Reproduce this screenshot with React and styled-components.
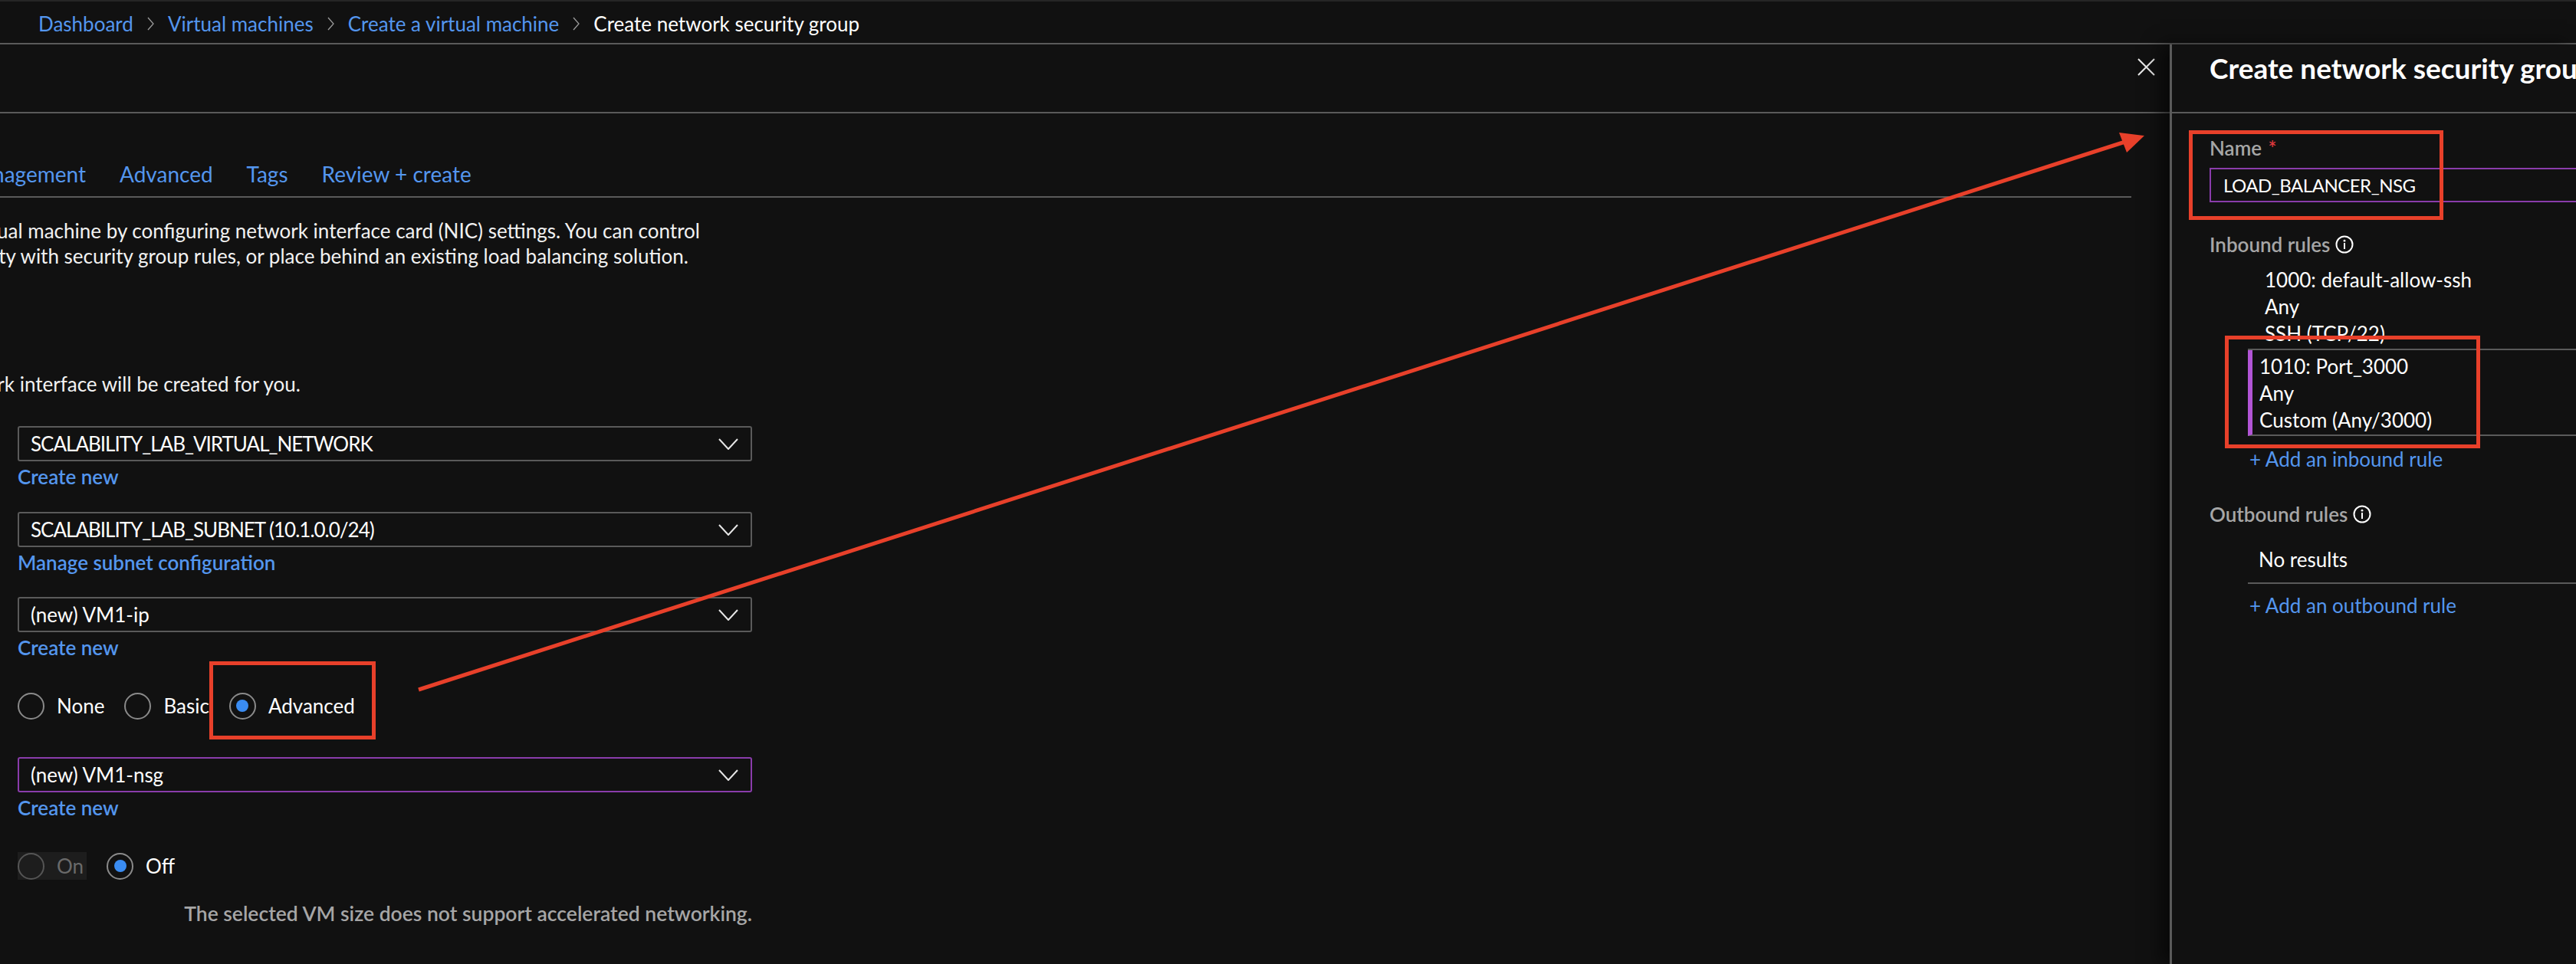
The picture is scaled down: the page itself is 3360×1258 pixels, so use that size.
import React from "react";
import styled, { createGlobalStyle } from "styled-components";

const LINK = "#5496ee";
const LINE = "#5a5a5a";
const PURPLE = "#8a3cab";
const RED = "#e8402a";

const GlobalStyle = createGlobalStyle`
  html, body { margin: 0; padding: 0; background: #111111; }
  body {
    width: 3360px;
    height: 1258px;
    overflow: hidden;
    font-family: Lato, "Open Sans", sans-serif;
    color: #ffffff;
  }
  * { box-sizing: border-box; }
`;

const Page = styled.div`
  position: relative;
  width: 3360px;
  height: 1258px;
  display: flex;
  flex-direction: column;
  background: #111111;
`;

/* ---------- breadcrumb ---------- */
const Crumbs = styled.nav`
  height: 58px;
  flex: none;
  border-top: 2px solid #262626;
  border-bottom: 2px solid ${LINE};
  display: flex;
  align-items: center;
  padding: 3px 0 0 50px;
  font-size: 26px;
`;

const Crumb = styled.span`
  color: ${(p) => (p.$current ? "#ffffff" : LINK)};
  white-space: nowrap;
`;

const CrumbSep = styled.svg`
  margin: 0 18px;
  width: 9px;
  height: 18px;
`;

/* ---------- layout ---------- */
const Main = styled.div`
  flex: 1;
  display: flex;
  min-height: 0;
`;

const LeftBlade = styled.section`
  flex: 1;
  min-width: 0;
  display: flex;
  flex-direction: column;
  overflow: hidden;
`;

const BladeHeader = styled.header`
  height: 90px;
  flex: none;
  border-bottom: 2px solid ${LINE};
  display: flex;
  justify-content: ${(p) => (p.$end ? "flex-end" : "flex-start")};
  align-items: flex-start;
  padding: ${(p) => (p.$end ? "18px 19px 0 0" : "8px 0 0 49px")};
`;

const CloseButton = styled.button`
  background: none;
  border: 0;
  padding: 0;
  width: 23px;
  height: 23px;
  display: flex;
`;

const LeftBody = styled.div`
  display: flex;
  flex-direction: column;
  padding-right: 50px;
`;

/* ---------- tabs ---------- */
const Tabs = styled.div`
  display: flex;
  gap: 44px;
  padding: 59px 0 9px;
  border-bottom: 2px solid ${LINE};
  font-size: 28px;
  line-height: 40px;
`;

const Tab = styled.span`
  color: ${LINK};
  white-space: nowrap;
`;

/* a line whose start is scrolled out of view on the left */
const ClipLine = styled.div`
  width: ${(p) => p.$end}px;
  display: flex;
  justify-content: flex-end;
  overflow: hidden;
  white-space: nowrap;
  flex: none;
`;

const Description = styled.div`
  margin-top: ${(p) => p.$top}px;
  font-size: 26px;
  line-height: 33px;
  color: #f2f2f2;
`;

/* ---------- form ---------- */
const Controls = styled.div`
  margin-left: 23px;
  width: 958px;
  display: flex;
  flex-direction: column;
`;

const Select = styled.div`
  margin-top: ${(p) => p.$top}px;
  height: 46px;
  border: 2px solid ${(p) => (p.$focus ? PURPLE : LINE)};
  border-radius: 3px;
  display: flex;
  align-items: center;
  justify-content: space-between;
  padding: 0 16px 0 15px;
  font-size: 26px;
  color: #ffffff;
`;

const SelectValue = styled.span`
  letter-spacing: ${(p) => p.$tight || 0}px;
  white-space: nowrap;
`;

const FieldLink = styled.a`
  margin-top: 2px;
  font-size: 26px;
  line-height: 36px;
  font-weight: 600;
  color: ${LINK};
  text-decoration: none;
  align-self: flex-start;
`;

const RadioGroup = styled.div`
  margin-top: ${(p) => p.$top}px;
  display: flex;
  align-items: center;
  gap: 26px;
`;

const RadioItem = styled.label`
  display: flex;
  align-items: center;
  gap: 16px;
  height: 36px;
  padding-right: ${(p) => (p.$disabled ? "4px" : "0")};
  background: ${(p) => (p.$disabled ? "#1d1d1d" : "transparent")};
  font-size: 26px;
  color: ${(p) => (p.$disabled ? "#6a6a6a" : "#ffffff")};
`;

const RadioCircle = styled.span`
  width: 35px;
  height: 35px;
  border-radius: 50%;
  border: 2px solid ${(p) => (p.$disabled ? "#555555" : "#8a8a8a")};
  display: flex;
  align-items: center;
  justify-content: center;

  &::after {
    content: "";
    width: 16px;
    height: 16px;
    border-radius: 50%;
    background: ${(p) => (p.$checked ? "#3a8cf2" : "transparent")};
  }
`;

const Note = styled.div`
  margin-top: 26px;
  align-self: flex-end;
  font-size: 26.5px;
  line-height: 36px;
  font-weight: 600;
  color: #a6a6a6;
`;

/* ---------- right blade ---------- */
const RightBlade = styled.aside`
  position: relative;
  z-index: 1;
  width: 530px;
  flex: none;
  border-left: 3px solid ${LINE};
  box-shadow: -12px 0 22px rgba(0, 0, 0, 0.55);
  background: #111111;
  display: flex;
  flex-direction: column;
`;

const Title = styled.h2`
  margin: 0;
  font-size: 37px;
  line-height: 46px;
  font-weight: 700;
  white-space: nowrap;
`;

const RightBody = styled.div`
  padding: 27px 0 0 49px;
  display: flex;
  flex-direction: column;
`;

const Label = styled.div`
  margin-top: ${(p) => p.$top || 0}px;
  display: flex;
  align-items: center;
  gap: 7px;
  font-size: 26px;
  line-height: 36px;
  font-weight: 600;
  color: #a6a6a6;
`;

const Required = styled.span`
  color: #e0393e;
  margin-left: 2px;
`;

const TextInput = styled.div`
  margin-top: 8px;
  width: 560px;
  height: 45px;
  border: 2px solid ${PURPLE};
  display: flex;
  align-items: center;
  padding-left: 16px;
  font-size: 24px;
  letter-spacing: -0.5px;
  white-space: nowrap;
`;

const RuleList = styled.div`
  margin: ${(p) => p.$top}px 0 0 50px;
  width: 600px;
  display: flex;
  flex-direction: column;
`;

const RuleRow = styled.div`
  display: flex;
  flex-direction: column;
  padding: ${(p) => p.$pad};
  border-left: ${(p) => (p.$selected ? "6px solid #b255d6" : "0")};
  border-bottom: 2px solid ${LINE};
  font-size: 26px;
  line-height: 35px;
  color: #ffffff;
  white-space: nowrap;
`;

const AddLink = styled.a`
  margin: ${(p) => p.$top}px 0 0 52px;
  font-size: 26px;
  line-height: 36px;
  color: ${LINK};
  text-decoration: none;
  white-space: nowrap;
`;

/* ---------- annotation overlay ---------- */
const Overlay = styled.svg`
  position: absolute;
  left: 0;
  top: 0;
  width: 3360px;
  height: 1258px;
  pointer-events: none;
  z-index: 5;
`;

const Chevron = () => (
  <svg width="26" height="15" viewBox="0 0 26 15">
    <polyline points="1,1 13,14 25,1" fill="none" stroke="#e6e6e6" strokeWidth="2" />
  </svg>
);

const InfoIcon = () => (
  <svg width="24" height="24" viewBox="0 0 24 24">
    <circle cx="12" cy="12" r="10.5" fill="none" stroke="#ffffff" strokeWidth="2" />
    <circle cx="12" cy="7.2" r="1.4" fill="#ffffff" />
    <rect x="11" y="10" width="2" height="8" fill="#ffffff" />
  </svg>
);

const crumbs = ["Dashboard", "Virtual machines", "Create a virtual machine"];

const SelectField = ({ top, value, link, focus, tight }) => (
  <>
    <Select $top={top} $focus={focus}>
      <SelectValue $tight={tight}>{value}</SelectValue>
      <Chevron />
    </Select>
    <FieldLink href="#">{link}</FieldLink>
  </>
);

const Radio = ({ label, checked, disabled }) => (
  <RadioItem $disabled={disabled}>
    <RadioCircle $checked={checked} $disabled={disabled} />
    {label}
  </RadioItem>
);

export default function App() {
  return (
    <Page>
      <GlobalStyle />
      <Crumbs>
        {crumbs.map((c) => (
          <React.Fragment key={c}>
            <Crumb>{c}</Crumb>
            <CrumbSep viewBox="0 0 9 18">
              <polyline points="1,1 8,9 1,17" fill="none" stroke="#9a9a9a" strokeWidth="1.3" />
            </CrumbSep>
          </React.Fragment>
        ))}
        <Crumb $current>Create network security group</Crumb>
      </Crumbs>

      <Main>
        <LeftBlade>
          <BladeHeader $end>
            <CloseButton aria-label="Close">
              <svg width="23" height="23" viewBox="0 0 23 23">
                <path d="M1 1 L22 22 M22 1 L1 22" stroke="#e8e8e8" strokeWidth="2" />
              </svg>
            </CloseButton>
          </BladeHeader>

          <LeftBody>
            <Tabs>
              <ClipLine $end={112}>
                <Tab>Management</Tab>
              </ClipLine>
              <Tab>Advanced</Tab>
              <Tab>Tags</Tab>
              <Tab>Review + create</Tab>
            </Tabs>

            <Description $top={27}>
              <ClipLine $end={913}>
                Define network connectivity for your virtual machine by configuring network interface card (NIC) settings. You can control
              </ClipLine>
              <ClipLine $end={898}>
                ports, inbound and outbound connectivity with security group rules, or place behind an existing load balancing solution.
              </ClipLine>
            </Description>

            <Description $top={134}>
              <ClipLine $end={392}>
                When creating a virtual machine, a network interface will be created for you.
              </ClipLine>
            </Description>

            <Controls>
              <SelectField top={38} value="SCALABILITY_LAB_VIRTUAL_NETWORK" link="Create new" tight={-1} />
              <SelectField top={28} value="SCALABILITY_LAB_SUBNET (10.1.0.0/24)" link="Manage subnet configuration" tight={-1} />
              <SelectField top={27} value="(new) VM1-ip" link="Create new" />

              <RadioGroup $top={40}>
                <Radio label="None" />
                <Radio label="Basic" />
                <Radio label="Advanced" checked />
              </RadioGroup>

              <SelectField top={49} value="(new) VM1-nsg" link="Create new" focus />

              <RadioGroup $top={40}>
                <Radio label="On" disabled />
                <Radio label="Off" checked />
              </RadioGroup>

              <Note>The selected VM size does not support accelerated networking.</Note>
            </Controls>
          </LeftBody>
        </LeftBlade>

        <RightBlade>
          <BladeHeader>
            <Title>Create network security group</Title>
          </BladeHeader>
          <RightBody>
            <Label>
              <span>
                Name<Required> *</Required>
              </span>
            </Label>
            <TextInput>LOAD_BALANCER_NSG</TextInput>

            <Label $top={37}>
              Inbound rules <InfoIcon />
            </Label>
            <RuleList $top={11}>
              <RuleRow $pad="0 0 2px 22px">
                <span>1000: default-allow-ssh</span>
                <span>Any</span>
                <span>SSH (TCP/22)</span>
              </RuleRow>
              <RuleRow $selected $pad="4px 0 1px 9px">
                <span>1010: Port_3000</span>
                <span>Any</span>
                <span>Custom (Any/3000)</span>
              </RuleRow>
            </RuleList>
            <AddLink href="#" $top={12}>+ Add an inbound rule</AddLink>

            <Label $top={36}>
              Outbound rules <InfoIcon />
            </Label>
            <RuleList $top={22}>
              <RuleRow $pad="2px 0 12px 14px">
                <span>No results</span>
              </RuleRow>
            </RuleList>
            <AddLink href="#" $top={10}>+ Add an outbound rule</AddLink>
          </RightBody>
        </RightBlade>
      </Main>

      <Overlay viewBox="0 0 3360 1258">
        <line x1="546" y1="900" x2="2772" y2="185" stroke={RED} strokeWidth="5" />
        <polygon points="2797,177 2764,173 2774,199" fill={RED} />
        <rect x="275.5" y="865.5" width="212" height="97" fill="none" stroke={RED} strokeWidth="5" />
        <rect x="2857.5" y="172.5" width="327" height="112" fill="none" stroke={RED} strokeWidth="5" />
        <rect x="2904.5" y="440.5" width="328" height="142" fill="none" stroke={RED} strokeWidth="5" />
      </Overlay>
    </Page>
  );
}
